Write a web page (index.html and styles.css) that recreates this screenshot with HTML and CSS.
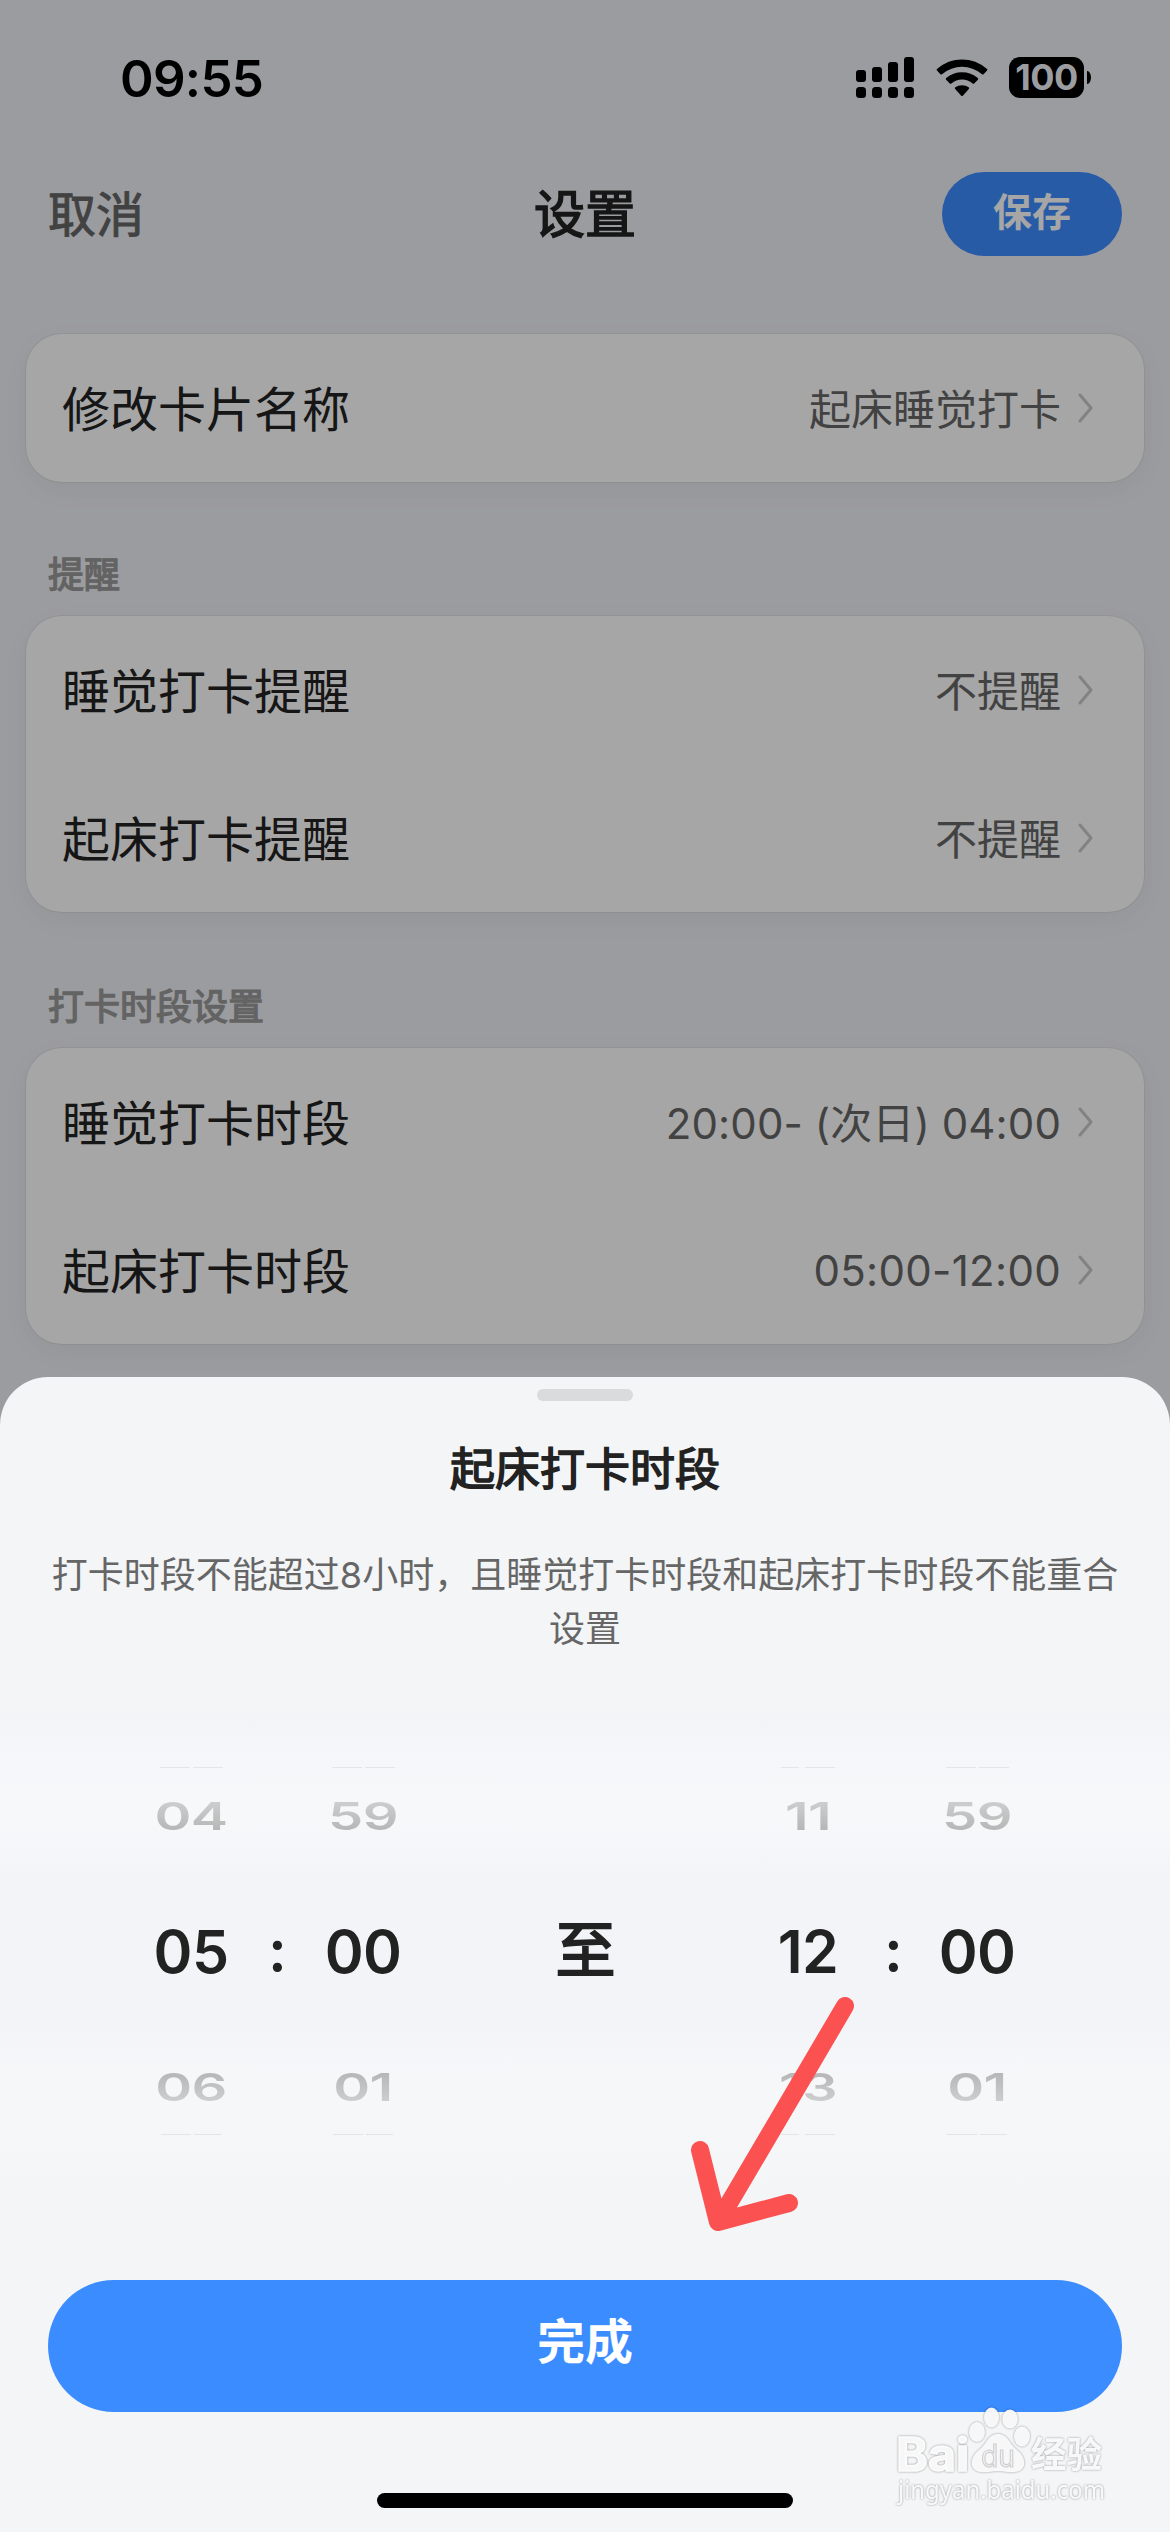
FILE: index.html
```html
<!DOCTYPE html>
<html lang="zh-CN">
<head>
<meta charset="utf-8">
<title>设置</title>
<link rel="stylesheet" href="styles.css">
</head>
<body>
<div class="screen">
  <main class="page">
    <header class="nav">
      <span class="nav-cancel">取消</span>
      <h1 class="nav-title">设置</h1>
      <span class="nav-save">保存</span>
    </header>
    <section class="card">
      <div class="row"><span class="label">修改卡片名称</span><span class="value">起床睡觉打卡</span><svg class="chevron" viewBox="0 0 16 30"><path d="M2 2 13 15 2 28"/></svg></div>
    </section>
    <h2 class="section-title">提醒</h2>
    <section class="card">
      <div class="row"><span class="label">睡觉打卡提醒</span><span class="value">不提醒</span><svg class="chevron" viewBox="0 0 16 30"><path d="M2 2 13 15 2 28"/></svg></div>
      <div class="row"><span class="label">起床打卡提醒</span><span class="value">不提醒</span><svg class="chevron" viewBox="0 0 16 30"><path d="M2 2 13 15 2 28"/></svg></div>
    </section>
    <h2 class="section-title">打卡时段设置</h2>
    <section class="card">
      <div class="row"><span class="label">睡觉打卡时段</span><span class="value value-range">20:00- (次日) 04:00</span><svg class="chevron" viewBox="0 0 16 30"><path d="M2 2 13 15 2 28"/></svg></div>
      <div class="row"><span class="label">起床打卡时段</span><span class="value value-time">05:00-12:00</span><svg class="chevron" viewBox="0 0 16 30"><path d="M2 2 13 15 2 28"/></svg></div>
    </section>
  </main>

  <div class="mask"></div>

  <div class="status">
    <span class="clock">09:55</span>
    <svg class="signal" viewBox="0 0 58 41">
      <rect x="0" y="13" width="10" height="12" rx="3"/><rect x="16" y="10" width="10" height="15" rx="3"/><rect x="32" y="5" width="10" height="20" rx="3"/><rect x="48" y="0" width="10" height="25" rx="3"/>
      <rect x="0" y="30" width="10" height="11" rx="3.5"/><rect x="16" y="30" width="10" height="11" rx="3.5"/><rect x="32" y="30" width="10" height="11" rx="3.5"/><rect x="48" y="30" width="10" height="11" rx="3.5"/>
    </svg>
    <svg class="wifi" viewBox="0 0 52 38">
      <path d="M1 11.6Q0 10.8 1 9.9Q12 .5 26 .5Q40 .5 51 9.9Q52 10.8 51 11.6L47.6 15.2Q46.900 15.900 46 15.200Q37 7.700 26 7.700Q15 7.700 6 15.200Q5.100 15.900 4.400 15.200Z"/>
      <path d="M10.100 20.700Q9.300 19.800 10.200 19Q17 13.300 26 13.300Q35 13.300 41.800 19Q42.700 19.800 41.900 20.700L38.200 24.500Q37.500 25.200 36.600 24.500Q32 20.500 26 20.500Q20 20.500 15.400 24.500Q14.500 25.200 13.800 24.500Z"/>
      <path d="M19.200 29.900Q18.300 29 19.300 28.300Q22 26.200 26 26.200Q30 26.200 32.700 28.300Q33.700 29 32.800 29.900L26.800 36.700Q26 37.500 25.200 36.700Z"/>
    </svg>
    <div class="battery"><span class="battery-body">100</span><i class="battery-nub"></i></div>
  </div>

  <div class="sheet">
    <i class="handle"></i>
    <h3 class="sheet-title">起床打卡时段</h3>
    <p class="sheet-desc">打卡时段不能超过8小时，且睡觉打卡时段和起床打卡时段不能重合设置</p>
    <div class="picker">
      <div class="wheel"><i class="edge"><b class="w30"></b><b class="w30"></b></i><span class="near above">04</span><span class="current">05</span><span class="near below">06</span><i class="edge edge-end"><b class="w30"></b><b class="w27"></b></i></div>
      <span class="current colon">:</span>
      <div class="wheel"><i class="edge"><b class="w30"></b><b class="w30"></b></i><span class="near above">59</span><span class="current">00</span><span class="near below">01</span><i class="edge edge-end"><b class="w30"></b><b class="w27"></b></i></div>
      <span class="to">至</span>
      <div class="wheel"><i class="edge"><b class="w18"></b><b class="w30"></b></i><span class="near above">11</span><span class="current">12</span><span class="near below">13</span><i class="edge edge-end"><b class="w18"></b><b class="w30"></b></i></div>
      <span class="current colon">:</span>
      <div class="wheel"><i class="edge"><b class="w30"></b><b class="w30"></b></i><span class="near above">59</span><span class="current">00</span><span class="near below">01</span><i class="edge edge-end"><b class="w30"></b><b class="w27"></b></i></div>
    </div>
    <div class="done">完成</div>
    <i class="home-bar"></i>
  </div>

  <svg class="arrow" viewBox="0 0 180 250"><path d="M165 21 38 237M20 165 38 237 109 218"/></svg>

  <svg class="watermark" viewBox="0 0 230 110">
    <g class="mark">
      <text class="mark-bai" x="6" y="73" textLength="73" lengthAdjust="spacingAndGlyphs">Bai</text>
      <ellipse cx="87" cy="34" rx="8" ry="10"/>
      <ellipse cx="101.500" cy="19.500" rx="7.500" ry="10"/>
      <ellipse cx="120" cy="21" rx="7.800" ry="9.500"/>
      <ellipse cx="132" cy="38.500" rx="8" ry="10"/>
      <path d="M108 36C118 36 119 46 127 52C136 59 138 72 125 74C118 75 115 73 108 73C101 73 98 75 91 74C78 72 80 59 89 52C97 46 98 36 108 36Z"/>
      <text class="mark-du" x="91" y="69" textLength="34" lengthAdjust="spacingAndGlyphs">du</text>
      <text class="mark-cn" x="141" y="70" textLength="71" lengthAdjust="spacingAndGlyphs">经验</text>
      <text class="mark-url" x="8" y="101" textLength="207" lengthAdjust="spacingAndGlyphs">jingyan.baidu.com</text>
    </g>
  </svg>
</div>
</body>
</html>
```
FILE: styles.css
```css
* { box-sizing: border-box; margin: 0; padding: 0; }
body {
  width: 1170px;
  height: 2532px;
  overflow: hidden;
  font-family: Inter, "Noto Sans CJK SC", sans-serif;
  color: #222;
}
i { font-style: normal; display: block; }
.screen { position: relative; width: 1170px; height: 2532px; overflow: hidden; background: #eff0f5; }

/* settings page */
.page { padding: 171px 26px 0; }
.nav { display: grid; grid-template-columns: 1fr auto 1fr; align-items: center; height: 84px; padding: 0 22px; margin-bottom: 79px; }
.nav-cancel { font-size: 48px; line-height: 84px; padding-top: 2px; color: #666; -webkit-text-stroke: 1px #666; }
.nav-title { font-size: 51px; line-height: 84px; padding-top: 2px; font-weight: 400; -webkit-text-stroke: 1.6px #222; }
.nav-save { justify-self: end; width: 180px; height: 84px; border-radius: 42px; background: #3d8dff; color: #fff; font-size: 39px; font-weight: 700; line-height: 80px; text-align: center; }
.card { border-radius: 36px; background: #fff; box-shadow: 0 0 0 1px rgba(0, 0, 0, .05), 0 8px 26px rgba(40, 30, 60, .05); }
.row { display: flex; align-items: center; height: 148px; padding: 0 50px 0 36px; }
.label { flex: 1; font-size: 48px; padding-bottom: 4px; }
.value { font-size: 42px; color: #666; margin-right: 17px; padding-bottom: 4px; }
.value-range { letter-spacing: .1px; }
.value-time { letter-spacing: .3px; padding-bottom: 0; }
.chevron { width: 16px; height: 30px; fill: none; stroke: #c8c8c8; stroke-width: 3; stroke-linecap: round; stroke-linejoin: round; }
.section-title { height: 134px; padding: 67px 22px 0; font-size: 36px; line-height: 52px; font-weight: 400; color: #999; -webkit-text-stroke: 1.3px #999; }
.card + .section-title:nth-of-type(2) { height: 136px; padding-top: 69px; }

.mask { position: absolute; inset: 0; background: rgba(0, 0, 0, .35); }

/* status bar */
.status { position: absolute; left: 0; top: 0; width: 1170px; height: 155px; display: flex; align-items: center; padding: 0 79px 0 120px; color: #000; }
.clock { flex: 1; font-size: 51px; font-weight: 600; letter-spacing: -.7px; padding-top: 1px; }
.signal { width: 58px; height: 41px; margin-right: 22px; }
.wifi { width: 52px; height: 38px; margin-right: 21px; }
.battery { display: flex; align-items: center; gap: 3px; }
.battery-body { width: 75px; height: 41px; border-radius: 11px; background: #000; color: #9c9da0; font-size: 36px; font-weight: 700; line-height: 41px; text-align: center; letter-spacing: -.5px; }
.battery-nub { width: 4px; height: 13px; border-radius: 0 4px 4px 0 / 0 7px 7px 0; background: #000; }

/* bottom sheet */
.sheet { position: absolute; left: 0; right: 0; top: 1377px; bottom: 0; display: flex; flex-direction: column; align-items: center; padding-top: 12px; border-radius: 48px 48px 0 0; background: #f3f5f7; }
.handle { width: 96px; height: 12px; border-radius: 6px; background: #dadbdd; }
.sheet-title { margin-top: 37px; font-size: 45px; line-height: 64px; font-weight: 400; -webkit-text-stroke: 1.5px #222; }
.sheet-desc { width: 1074px; margin-top: 46px; font-size: 36px; line-height: 54px; color: #666; text-align: center; }
.picker {
  display: grid;
  grid-template-columns: 86px 86px 86px 359px 86px 84px 84px;
  align-items: center;
  align-self: stretch;
  height: 480px;
  margin-top: 56px;
  padding-left: 148px;
  background: linear-gradient(#f3f4f7 0, #f7f8fa 17%, #f7f8fa 23%, #f3f4f7 35%, #f3f4f7 65%, #f6f7f9 76%, #f6f7f9 84%, #f3f5f7 100%);
}
.wheel { display: grid; grid-template-rows: 56px 96px 176px 94px 58px; justify-items: center; align-items: center; }
.edge { display: flex; gap: 3px; align-self: end; }
.edge-end { align-self: start; }
.edge b { height: 1px; background: #e5e5e7; }
.w18 { width: 18px; margin-right: 3px; }
.w27 { width: 27px; }
.w30 { width: 30px; }
.current { font-size: 59px; font-weight: 600; text-align: center; line-height: 72px; letter-spacing: -.6px; }
.colon { margin-top: -4px; }
.to { font-size: 60px; text-align: center; line-height: 72px; margin-top: -4px; -webkit-text-stroke: 2px #222; }
.near { font-size: 56px; font-weight: 600; line-height: 72px; letter-spacing: -.6px; transform: scaleY(.68); color: transparent; background-clip: text; -webkit-background-clip: text; }
.above { background-image: linear-gradient(#cecece 20%, #b6b6b6 80%); }
.below { background-image: linear-gradient(#b6b6b6 20%, #cecece 80%); }
.done { width: 1074px; height: 132px; margin-top: 88px; border-radius: 66px; background: #3b8cff; color: #fff; font-size: 48px; font-weight: 700; line-height: 124px; text-align: center; }
.home-bar { width: 416px; height: 15px; margin-top: 81px; border-radius: 8px; background: #000; }

/* annotations over the screen */
.arrow { position: absolute; left: 680px; top: 1985px; width: 180px; height: 250px; fill: none; stroke: #fb5151; stroke-width: 18; stroke-linecap: round; stroke-linejoin: round; }
.watermark { position: absolute; left: 890px; top: 2398px; width: 230px; height: 110px; filter: drop-shadow(0 0 1px rgba(0, 0, 0, .4)); }
.mark { fill: #fcfcfc; fill-opacity: .95; }
.mark-bai { font: 700 46px Inter, sans-serif; stroke: #fcfcfc; stroke-width: 1.5; }
.mark-du { font: 400 31px Inter, sans-serif; fill: #eeeff1; stroke: #cfcfd2; stroke-width: 1.2; }
.mark-cn { font: 700 36px "Noto Sans CJK SC", sans-serif; }
.mark-url { font: 400 25px "Noto Sans", sans-serif; }
```
